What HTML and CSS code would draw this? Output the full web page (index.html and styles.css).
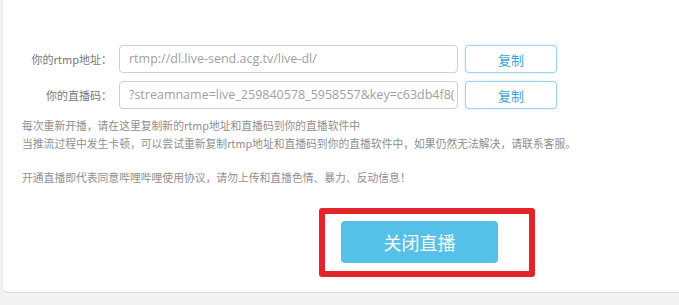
FILE: index.html
```html
<!DOCTYPE html>
<html lang="zh">
<head>
<meta charset="utf-8">
<link rel="stylesheet" href="styles.css">
</head>
<body>
<div class="card">
  <div class="form">
    <div class="row">
      <label class="label">你的rtmp地址：</label>
      <div class="input">rtmp://dl.live-send.acg.tv/live-dl/</div>
      <button class="copy">复制</button>
    </div>
    <div class="row">
      <label class="label">你的直播码：</label>
      <div class="input">?streamname=live_259840578_5958557&amp;key=c63db4f8(</div>
      <button class="copy">复制</button>
    </div>
  </div>
  <div class="notes">
    <p>每次重新开播，请在这里复制新的rtmp地址和直播码到你的直播软件中<br>当推流过程中发生卡顿，可以尝试重新复制rtmp地址和直播码到你的直播软件中，如果仍然无法解决，请联系客服。</p>
    <p>开通直播即代表同意哔哩哔哩使用协议，请勿上传和直播色情、暴力、反动信息！</p>
  </div>
  <div class="highlight">
    <button class="close">关闭直播</button>
  </div>
</div>
</body>
</html>
```

FILE: styles.css
```css
html, body {
  margin: 0;
  padding: 0;
}
body {
  background: #f3f3f3;
  font-family: "Noto Sans CJK SC", "Noto Sans", sans-serif;
  width: 679px;
  height: 305px;
  overflow: hidden;
}
.card {
  margin-left: 2px;
  height: 293px;
  box-sizing: border-box;
  background: #fff;
  border-left: 1px solid #e8e8e8;
  border-bottom: 1px solid #dcdcdc;
  border-bottom-left-radius: 6px;
  padding-top: 45px;
}
.form {
  display: flex;
  flex-direction: column;
  gap: 8px;
}
.row {
  display: grid;
  grid-template-columns: 109px 339px 92px;
  column-gap: 7px;
  align-items: center;
  height: 28px;
}
.label {
  text-align: right;
  font-size: 11px;
  color: #777;
  line-height: 28px;
}
.input {
  height: 28px;
  box-sizing: border-box;
  border: 1px solid #cfcfcf;
  border-radius: 4px;
  padding: 0 9px;
  font-family: "Open Sans", "Noto Sans", sans-serif;
  font-size: 12.5px;
  line-height: 26px;
  color: #a0a0a0;
  white-space: nowrap;
  overflow: hidden;
}
.copy {
  height: 28px;
  box-sizing: border-box;
  border: 1px solid #9fd4ea;
  border-radius: 4px;
  background: #fff;
  box-shadow: 0 0 2px rgba(120, 200, 235, 0.5);
  color: #3aa6dc;
  font-family: "Noto Sans CJK SC", sans-serif;
  font-size: 13px;
  padding: 0;
}
.notes {
  margin-top: 7px;
  padding-left: 19px;
  font-size: 10.8px;
  line-height: 18px;
  color: #8f8f8f;
}
.notes p {
  margin: 0 0 16px 0;
}
.notes p:last-child {
  margin-bottom: 0;
}
.highlight {
  margin-top: 22px;
  margin-left: 316px;
  width: 216px;
  height: 69px;
  box-sizing: border-box;
  border: 6px solid #e3242b;
  border-radius: 3px;
  padding: 7px 0 0 16px;
}
.close {
  display: block;
  width: 157px;
  height: 42px;
  border: none;
  border-radius: 4px;
  background: #55c0e8;
  color: #fff;
  font-family: "Noto Sans CJK SC", sans-serif;
  font-size: 18px;
  padding: 0;
}
```
